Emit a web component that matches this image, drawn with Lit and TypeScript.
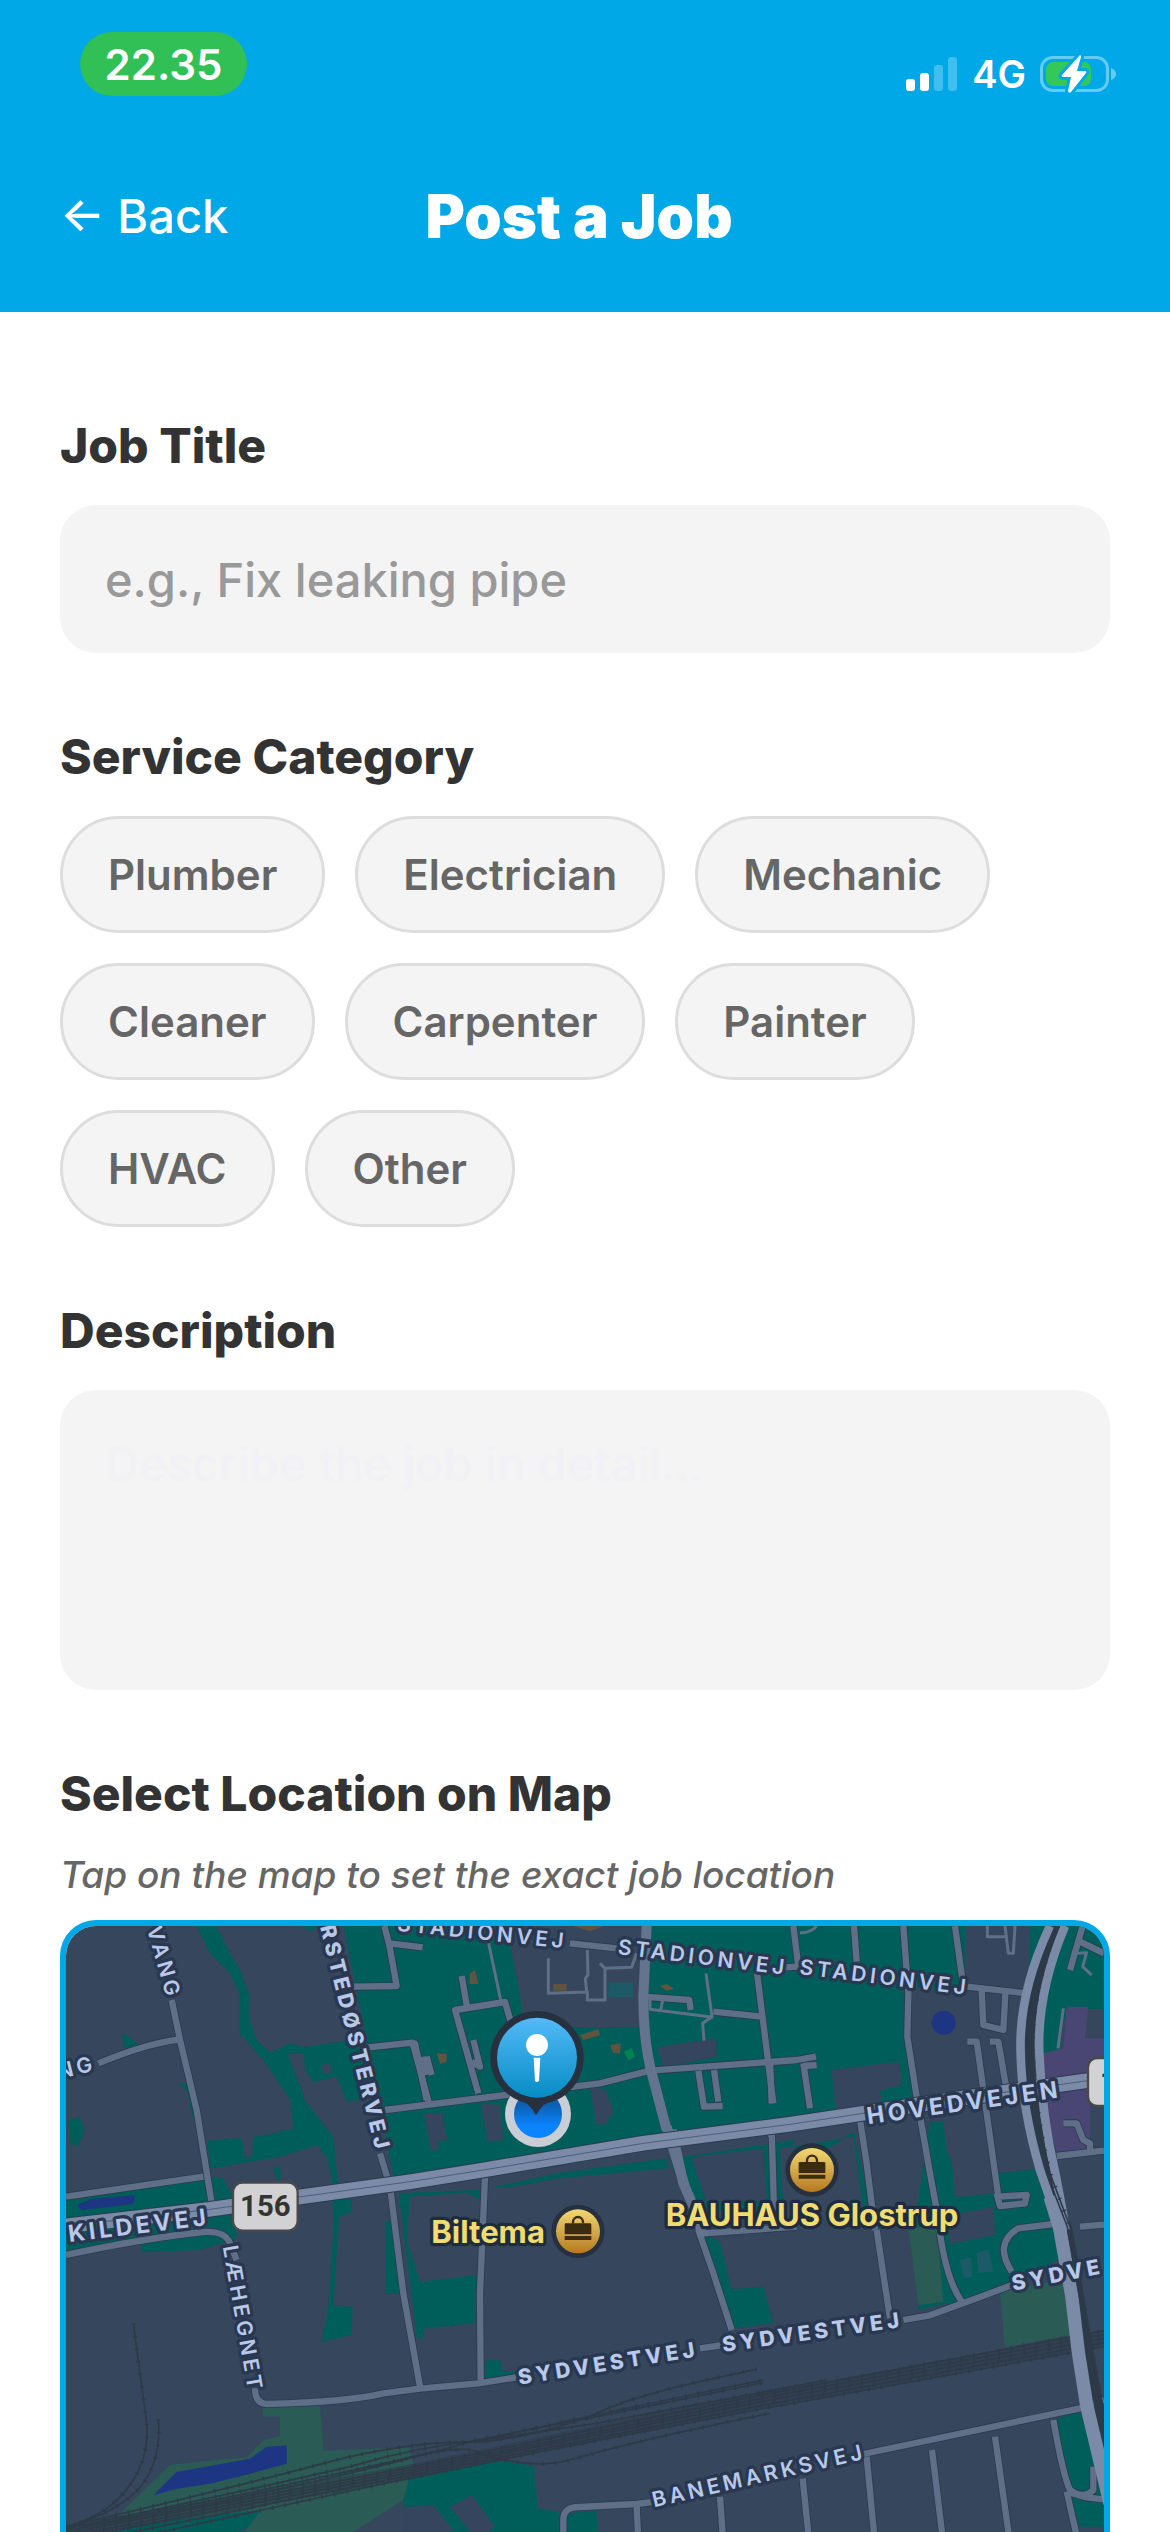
import { LitElement, html, svg, css } from "lit";
import { customElement, state } from "lit/decorators.js";
import { classMap } from "lit/directives/class-map.js";

const CATEGORIES = [
  "Plumber", "Electrician", "Mechanic", "Cleaner",
  "Carpenter", "Painter", "HVAC", "Other",
];

type Label = { text: string; x: number; y: number; angle: number; kind: string };

const STREETS: Label[] = [
  { text: "VANG", x: 290, y: 55, angle: 74, kind: "street" },
  { text: "NG", x: 28, y: 508, angle: -14, kind: "street" },
  { text: "RSTEDØSTERVEJ", x: 810, y: 50, angle: 76, kind: "street bold" },
  { text: "STADIONVEJ", x: 1040, y: 62, angle: 6, kind: "street" },
  { text: "STADIONVEJ", x: 1702, y: 132, angle: 7, kind: "street" },
  { text: "STADIONVEJ", x: 2247, y: 192, angle: 7, kind: "street" },
  { text: "KILDEVEJ", x: 58, y: 996, angle: -7, kind: "street large" },
  { text: "HOVEDVEJEN", x: 2454, y: 643, angle: -8, kind: "street large" },
  { text: "LÆHEGNET", x: 518, y: 1010, angle: 80, kind: "street" },
  { text: "SYDVESTVEJ", x: 1408, y: 1424, angle: -9, kind: "street bold" },
  { text: "SYDVESTVEJ", x: 2020, y: 1326, angle: -8, kind: "street bold" },
  { text: "SYDVE", x: 2890, y: 1142, angle: -11, kind: "street bold" },
  { text: "BANEMARKSVEJ", x: 1812, y: 1792, angle: -13, kind: "street" },
];

const PARKS = [
  "880,48 1380,48 1380,100 1410,256 1424,350 1780,352 1780,48 2745,48 2745,248 2580,230 2568,380 2600,560 2440,600 1780,690 1080,810 1030,800 1000,640",
  "2940,48 3000,48 2925,300 2925,210 2935,180",
  "3040,48 3162,48 3162,300 3110,300 3050,320 2980,330 2985,200",
  "2990,290 3060,290 3040,340 2980,340 2980,300",
  "2975,250 3060,250 3040,330 3030,420 2980,440 2970,420",
  "440,48 500,48 535,120 570,180 600,260 600,330 620,390 660,428 720,400 760,412 890,392 950,400 930,570 890,575 860,500 790,516 765,480 762,430 712,430 750,525 765,570 810,630 850,680 862,800 868,850 905,868 905,905 868,920 850,1188 908,1190 905,1275 815,1296 835,1190 850,960 845,800 830,742 800,706 690,740 600,756 480,776 472,692 575,684 585,745 606,740 610,682 730,656 720,568 640,450 568,370 568,250 540,190 480,130",
  "215,375 230,375 265,405 225,418",
  "385,518 412,524 436,635 428,620 412,546",
  "55,632 90,622 103,660 85,710 62,700",
  "755,48 805,48 780,66",
  "48,872 460,805 515,800 545,850 560,905 560,985 450,1020 275,1026 270,990 48,1020",
  "670,770 692,775 692,810 680,810",
  "1005,935 1030,930 1062,1150 1005,1150",
  "1046,850 1145,845 1290,840 1520,790 1850,745 1855,775 1520,806 1385,832 1320,830 1290,870 1250,848 1080,860 1070,990 1110,1115 1285,1095 1275,1240 1125,1255 1115,1290 1100,1280",
  "1305,1351 1350,1351 1356,1382 1400,1386 1385,1402 1305,1408",
  "1860,748 2230,690 2240,780 2410,665 2430,750 2465,910 2440,900 2410,680 2190,715 2200,900 1920,900",
  "1955,968 2010,996 2045,1138 2140,1130 2170,1238 2050,1256",
  "2640,636 2680,634 2690,725 2705,750 2715,862 2850,850 2845,790 2975,775 3015,910 3030,1046 2880,1125 2740,1170 2605,1200 2590,960",
  "200,1866 300,1826 630,1794 632,1838 560,1866 560,1900 200,1900",
  "1060,1710 1340,1650 1450,1668 1465,1796 1530,1806 1530,1900 1060,1900",
  "1550,1811 1640,1801 1642,1900 1550,1900",
  "3020,1526 3090,1506 3162,1700 3162,1850 3090,1850 3050,1740",
];

const BUILDINGS = [
  "2345,480 2548,455 2556,524 2490,542 2496,592 2358,602",
  "1822,412 1998,385 2000,440 1840,470",
  "1122,610 1178,608 1190,690 1160,696 1168,718 1142,722",
  "1292,580 1350,586 1360,690 1314,696",
  "1620,530 1668,540 1690,605 1670,640 1640,646",
  "1925,742 2140,716 2150,870 1970,880",
  "815,465 840,460 845,490 820,490",
  "1200,1790 1265,1756 1335,1850 1280,1890",
  "1060,1791 1150,1786 1215,1866 1060,1866",
  "2700,916 2830,890 2836,975 2700,1002",
  "2745,48 2938,48 2938,218 2760,212",
];

const MINOR = [
  "M365,270 L390,390 L440,600 L485,880",
  "M145,460 Q290,400 390,388",
  "M48,860 L460,800",
  "M1003,48 L1018,105 L1040,228 L912,230 M1018,100 L1118,112",
  "M955,412 L1088,398 L1138,585 M1120,440 L1130,490",
  "M1005,600 L1650,520 L1800,482 L2240,450 L2298,440",
  "M990,730 L1020,830 L1060,1150 L1110,1430 M1020,800 L1022,850",
  "M1080,400 L1095,400 L1130,570 M1130,440 L1145,495 M1115,490 L1145,480",
  "M1235,198 L1250,285 M1285,550 L1215,300 L1365,276 L1385,345",
  "M1270,390 L1290,470 L1265,455",
  "M1560,100 L1700,115 M1780,260 L1918,270 L1922,300",
  "M2120,180 L2155,460 L2170,580 M1990,305 L2135,320",
  "M1945,482 L1962,590 L2018,588 M1992,480 L2005,575",
  "M2230,48 L2245,170 L2200,172 M2412,48 L2420,155 M2560,48 L2575,250 L2572,380 L2600,560 L2640,790 L2662,910",
  "M2715,48 L2738,215 M2750,230 L2930,250 M2795,240 L2800,345 L2860,360 L2866,250",
  "M2752,395 L2780,395 L2845,860 L2930,855 L2925,880 L2850,888 L2840,850 M2820,395 L2845,395 L2870,540",
  "M2160,450 L2165,580 M2260,460 L2280,595 M2260,468 L2300,465",
  "M2430,630 L2450,760 L2475,960",
  "M2165,660 L2172,900 M2165,680 L2155,660",
  "M1305,800 L1290,1150 L1292,1410",
  "M48,1035 Q280,985 460,966 Q525,962 540,1000 L560,1050",
  "M615,1435 Q615,1480 650,1482 Q900,1475 1000,1450 L1110,1436 L1285,1420 L1400,1402",
  "M1945,960 L1990,1090 L2045,1260 M1960,970 L2240,950",
  "M1950,1315 L2020,1305 M2560,1230 L2640,1216 L2780,1165 L2900,1120",
  "M2480,960 L2520,1225 M2670,970 Q2690,1110 2735,1175",
  "M2885,1085 Q2830,1000 2905,955 L3010,942 M3090,950 L3162,944",
  "M1540,1900 L1540,1830 Q1540,1790 1590,1791 L1760,1782 L1815,1775",
  "M1760,1790 L1765,1900 M2010,1760 L2020,1900",
  "M2440,1632 L3090,1495 L3162,1470",
  "M2450,1640 L2475,1900 M2646,1620 L2680,1900 M2835,1580 L2880,1900 M2258,1706 L2278,1900",
  "M3010,1530 Q3040,1700 3060,1740 Q3100,1770 3130,1740 L3130,1670 M3050,1745 L3110,1762 L3162,1768",
  "M3050,1745 L3085,1900",
  "M3098,48 L3060,180 M3090,95 L3162,130",
  "M3040,640 L3080,640 L3100,690 L3120,700 L3120,725 M3020,738 L3162,722",
];

const PATHS = [
  "M1495,145 L1495,250 L1612,246 L1612,270 L1665,270 L1665,175 L1745,172 L1760,130 M1612,120 L1614,195 L1606,205 L1610,246 M1650,160 L1665,175",
  "M1316,100 L1352,270",
  "M1968,190 L1986,320 L1958,340 L1962,392 M1800,260 L1800,298 L1990,322 M1838,270 L1832,300",
  "M2812,48 L2812,80 L2865,80 M2865,48 L2875,130 L2890,130 L2895,48",
  "M3040,295 L3024,415 M3080,130 L3110,128 L3098,170 L3125,195",
  "M2250,68 Q2280,70 2300,48",
];

const MAJOR = [
  "M1790,48 L1780,260 Q1780,400 1808,500 L1850,660",
  "M1850,650 L1905,830 M1865,660 L1900,820 L1935,900 L1960,980",
];

const HIGHWAY =
  "M48,948 L480,898 L1080,815 L1300,780 L1780,700 L2220,643 L2440,610 L2700,570 L3162,505";

const EAST_ROADS = [
  "M3000,48 Q2905,250 2912,430 Q2915,590 2970,780 L3020,925",
  "M3045,48 Q2960,250 2968,430 Q2975,620 3018,800 L3048,960",
];

const EAST_AVENUE =
  "M3000,860 L3028,950 L3065,1156 L3085,1326 L3110,1486 L3180,1780";

const EAST_RAIL = [
  "M3016,48 Q2935,250 2938,430 Q2945,600 2990,790 L3052,950 L3095,1200 L3130,1400 L3175,1640",
  "M3024,48 Q2943,250 2948,430 Q2955,600 3000,790 L3060,950 L3105,1200 L3142,1400 L3185,1640",
];

const RAIL_BED = "M48,1868 L1080,1686 L1640,1568 L2160,1466 L3162,1284";

const RAILS = [
  "M250,1240 L290,1540 Q300,1660 220,1750 Q160,1820 48,1850",
  "M325,1528 Q335,1640 280,1720 Q220,1800 48,1856",
  "M48,1850 Q520,1740 820,1660 Q1080,1590 1300,1596 Q1500,1570 1640,1510 Q1760,1450 2120,1378",
  "M48,1856 Q600,1740 900,1670 Q1100,1610 1300,1590 Q1600,1520 2140,1410",
  "M100,1850 Q700,1730 1080,1642 Q1250,1600 1300,1632 Q1440,1680 1560,1650 Q1760,1590 2160,1510",
  "M48,1862 Q800,1730 1280,1590 L1640,1520 L2140,1418",
  "M48,1870 L1080,1672 L1640,1556 L2160,1450 L3162,1262",
  "M48,1880 L1080,1680 L1640,1566 L2160,1460 L3162,1274",
  "M48,1890 L1080,1688 L1640,1574 L2160,1470 L3162,1286",
  "M120,1892 L1080,1696 L1640,1584 L2160,1482 L3162,1298",
  "M220,1890 L1080,1704 L1640,1592 L2160,1492 L3162,1310",
  "M1300,1590 L1640,1540 L2330,1410",
];

@customElement("job-map")
export class JobMap extends LitElement {
  static styles = css`
    :host { display: block; }
    .map {
      display: block;
      width: 100%;
      font-family: Inter, "Liberation Sans", sans-serif;
    }
    .park { fill: #005e5a; }
    .grass { fill: #2a5b55; }
    .building { fill: #36455e; }
    .retail { fill: #4a4673; }
    .lake { fill: #1d3583; }
    .road { fill: none; stroke: #5f6f87; stroke-linejoin: round; }
    .casing { fill: none; stroke: #2b3b50; stroke-linejoin: round; }
    .minor { stroke-width: 19; }
    .minor-casing { stroke-width: 24; }
    .path { stroke-width: 9; }
    .major { stroke: #64748e; stroke-width: 30; }
    .highway { stroke: #7b8ba7; stroke-width: 44; }
    .east { stroke: #7b8ba7; stroke-width: 26; }
    .avenue { stroke: #7b8ba7; stroke-width: 40; }
    .east-bed { fill: none; stroke: #2c3948; stroke-width: 28; }
    .median { fill: none; stroke: #35455b; stroke-width: 2; }
    .bed { fill: none; stroke: #2e3a48; stroke-width: 44; opacity: 0.55; }
    .rail { fill: none; stroke: #2e3a48; stroke-width: 5; }
    .ties { fill: none; stroke: #2e3a48; stroke-width: 13; stroke-dasharray: 4 34; }
    .street {
      fill: #b9c8e8;
      stroke: #293850;
      stroke-width: 20;
      stroke-linejoin: round;
      paint-order: stroke;
      font-size: 63px;
      font-weight: 600;
      letter-spacing: 11px;
    }
    .bold { font-weight: 800; letter-spacing: 12px; }
    .large { font-size: 70px; font-weight: 700; }
    .poi {
      fill: #f1dc72;
      stroke: #1f2c40;
      stroke-width: 20;
      stroke-linejoin: round;
      paint-order: stroke;
      font-size: 93px;
      font-weight: 700;
    }
    .shield { fill: #d2d2d4; stroke: #4b4848; stroke-width: 7; }
    .shield-text { fill: #343434; font: 700 88px "Liberation Sans Narrow", Roboto, sans-serif; }
    .ring { fill: #27303f; }
    .bag { fill: #3b2c10; }
    .handle { fill: none; stroke: #3b2c10; stroke-width: 7; }
  `;

  private badge(cx: number, cy: number) {
    return svg`
      <g transform="translate(${cx} ${cy})">
        <circle class="ring" r="80"></circle>
        <circle r="66" fill="url(#gold)"></circle>
        <path class="handle" d="M-15,-24 V-28 A15,15 0 0 1 15,-28 V-24"></path>
        <path class="bag" d="M-40,-20 Q-40,-24 -36,-24 H36 Q40,-24 40,-20 V9 H-40 Z M-40,14 H40 V26 H-40 Z"></path>
      </g>`;
  }

  render() {
    return html`
      <svg class="map" viewBox="48 48 3114 2664" role="img" aria-label="Map of Glostrup">
        <defs>
          <linearGradient id="gold" x1="0" y1="0" x2="0" y2="1">
            <stop offset="0" stop-color="#f2d873"></stop>
            <stop offset="1" stop-color="#b67a20"></stop>
          </linearGradient>
          <linearGradient id="azure" x1="0" y1="0" x2="0" y2="1">
            <stop offset="0" stop-color="#52baf7"></stop>
            <stop offset="1" stop-color="#078cc4"></stop>
          </linearGradient>
          <linearGradient id="dot" x1="0" y1="0" x2="0" y2="1">
            <stop offset="0.3" stop-color="#0c5fb0"></stop>
            <stop offset="0.75" stop-color="#0a84ff"></stop>
          </linearGradient>
        </defs>
        <rect x="48" y="48" width="3114" height="2664" fill="#36475d"></rect>
        ${PARKS.map((p) => svg`<polygon class="park" points=${p}></polygon>`)}
        <polygon class="grass" points="640,1490 810,1480 820,1622 1075,1612 1090,1660 1060,1770 910,1866 560,1900 632,1800 200,1850 48,1866 48,1845 200,1820 360,1664 590,1642 640,1590 690,1578 690,1520 640,1520"></polygon>
        <polygon class="grass" points="2575,950 2660,950 2680,1176 2605,1186"></polygon>
        <polygon class="grass" points="2850,1146 3050,1106 3060,1276 2865,1311"></polygon>
        ${BUILDINGS.map((p) => svg`<polygon class="building" points=${p}></polygon>`)}
        <polygon class="retail" points="3050,290 3115,290 3105,385 3162,385 3162,530 3120,560 3120,720 3020,725 2980,590 2980,430 3040,415"></polygon>
        <polygon class="lake" points="310,1756 380,1686 600,1646 650,1611 710,1606 710,1661 600,1691 480,1721 380,1736"></polygon>
        <polygon class="lake" points="80,885 130,866 255,856 250,882 95,900"></polygon>
        <circle class="lake" cx="2681" cy="338" r="36"></circle>
        <g fill="#1d5a68">
          <rect x="1675" y="218" width="74" height="44"></rect>
          <path d="M2730,1050 L2765,1042 L2765,1100 L2740,1105 Z M2780,1030 L2815,1018 L2830,1085 L2785,1088 Z"></path>
        </g>
        <g fill="#5f5440">
          <path d="M1260,190 L1275,180 L1285,222 L1258,222 Z M1510,222 H1550 V242 H1510 Z M1830,228 L1850,222 L1872,236 L1850,242 Z M1590,375 L1645,358 L1650,376 L1600,390 Z M1680,405 L1712,400 L1710,430 L1690,430 Z M1160,430 L1190,432 L1190,455 L1170,462 Z M1570,48 H1660 L1620,64 Z"></path>
        </g>
        <path fill="#00834f" d="M1722,425 L1745,415 L1755,440 L1735,450 Z"></path>

        <path class="bed" d=${RAIL_BED}></path>
        ${RAILS.map((d) => svg`<path class="rail" d=${d}></path><path class="ties" d=${d}></path>`)}
        ${MINOR.map((d) => svg`<path class="casing minor-casing" d=${d}></path>`)}
        ${MINOR.map((d) => svg`<path class="road minor" d=${d}></path>`)}
        ${PATHS.map((d) => svg`<path class="road path" d=${d}></path>`)}
        ${MAJOR.map((d) => svg`<path class="road major" d=${d}></path>`)}
        <path class="casing" stroke-width="50" d=${HIGHWAY}></path>
        <path class="road highway" d=${HIGHWAY}></path>
        <path class="median" d=${HIGHWAY}></path>
        <path class="east-bed" d=${EAST_RAIL[0]}></path>
        ${EAST_ROADS.map((d) => svg`<path class="road east" d=${d}></path>`)}
        <path class="road avenue" d=${EAST_AVENUE}></path>
        ${EAST_RAIL.map((d) => svg`<path class="rail" d=${d}></path>`)}
        <path class="ties" d=${EAST_RAIL[1]}></path>

        ${STREETS.map((s) => svg`
          <text class=${s.kind} transform="translate(${s.x} ${s.y}) rotate(${s.angle})">${s.text}</text>`)}

        <rect class="shield" x="549" y="818" width="194" height="144" rx="28"></rect>
        <text class="shield-text" x="646" y="918" text-anchor="middle">156</text>
        <rect class="shield" x="3114" y="444" width="194" height="144" rx="28"></rect>
        <text class="shield-text" x="3150" y="546">1</text>

        <circle cx="1464" cy="612" r="99" fill="#c9cdd6"></circle>
        <circle cx="1464" cy="612" r="72" fill="url(#dot)"></circle>
        <path class="ring" d="M1400,560 Q1440,580 1458,616 Q1476,580 1520,560 Z"></path>
        <circle class="ring" cx="1461" cy="443" r="140"></circle>
        <circle cx="1461" cy="443" r="120" fill="url(#azure)"></circle>
        <circle cx="1461" cy="405" r="33" fill="#ffffff"></circle>
        <path fill="#ffffff" d="M1451,443 H1471 L1467,512 Q1461,520 1455,512 Z"></path>

        ${this.badge(1584, 964)}
        ${this.badge(2286, 780)}
        <text class="poi" x="1144" y="1000">Biltema</text>
        <text class="poi" x="2286" y="948" text-anchor="middle">BAUHAUS Glostrup</text>
      </svg>
    `;
  }
}

@customElement("app-root")
export class AppRoot extends LitElement {
  @state() private category = "";

  static styles = css`
    :host {
      display: flex;
      flex-direction: column;
      height: 100vh;
      overflow: hidden;
      background: #ffffff;
      color: #333333;
      font-family: Inter, "Liberation Sans", sans-serif;
    }
    button, input, textarea { font-family: inherit; margin: 0; }
    .top { background: #00a8e8; color: #ffffff; flex: none; }
    .status {
      display: flex;
      align-items: center;
      justify-content: space-between;
      padding: 32px 54px 0 80px;
    }
    .time {
      display: grid;
      place-items: center;
      width: 167px;
      height: 64px;
      border-radius: 32px;
      background: #30c055;
      font-size: 42px;
      font-weight: 600;
    }
    .signals {
      display: flex;
      align-items: center;
      gap: 14px;
      padding-top: 20px;
      font-size: 38px;
      line-height: 44px;
      font-weight: 600;
    }
    .signals svg { display: block; }
    .bar {
      display: flex;
      align-items: center;
      justify-content: space-between;
      padding: 84px 60px 60px;
    }
    .back {
      border: 0;
      padding: 0;
      background: none;
      color: inherit;
      font-size: 47px;
      line-height: 58px;
      font-weight: 500;
      text-align: left;
    }
    .title { margin: 0; font-size: 60px; line-height: 72px; font-weight: 900; }
    .spacer { width: 180px; }
    .form {
      flex: 1;
      min-height: 0;
      overflow-y: auto;
      scrollbar-width: none;
      display: flex;
      flex-direction: column;
      gap: 75px;
      padding: 105px 60px;
    }
    .field { display: flex; flex-direction: column; flex: none; gap: 30px; }
    .label { margin: 0; font-size: 48px; line-height: 58px; font-weight: 800; }
    .input {
      display: block;
      box-sizing: border-box;
      width: 100%;
      border: 0;
      border-radius: 36px;
      background: #f4f4f4;
      padding: 45px;
      color: #333333;
      font-size: 47px;
      line-height: 58px;
      font-weight: 500;
      resize: none;
    }
    .input::placeholder { color: #999999; opacity: 1; }
    .single { height: 148px; }
    .area { height: 300px; }
    .area::placeholder { color: #f1f1f6; }
    .chips { display: flex; flex-wrap: wrap; gap: 30px; }
    .chip {
      border: 3px solid #dddddd;
      border-radius: 60px;
      background: #f4f4f4;
      padding: 30px 45px;
      color: #666666;
      font-size: 42px;
      line-height: 51px;
      font-weight: 600;
    }
    .chosen { background: #00a8e8; border-color: #00a8e8; color: #ffffff; }
    .hint {
      margin: 0;
      color: #666666;
      font-size: 37px;
      line-height: 43px;
      font-weight: 500;
      font-style: italic;
    }
    .located { display: flex; flex-direction: column; gap: 24px; }
    .frame { overflow: hidden; border: 6px solid #00a8e8; border-radius: 36px; }
  `;

  render() {
    return html`
      <header class="top">
        <div class="status">
          <span class="time">22.35</span>
          <div class="signals">
            <svg width="52" height="34" viewBox="0 0 52 34" fill="#ffffff" aria-hidden="true">
              <rect x="0" y="22" width="9" height="12" rx="3"></rect>
              <rect x="14" y="16" width="9" height="18" rx="3"></rect>
              <rect x="28" y="8" width="9" height="26" rx="3" opacity="0.25"></rect>
              <rect x="42" y="0" width="9" height="34" rx="3" opacity="0.25"></rect>
            </svg>
            <span>4G</span>
            <svg width="76" height="38" viewBox="0 0 76 38" aria-hidden="true">
              <rect x="1.5" y="2.5" width="66" height="33" rx="11" fill="none" stroke="#66cbf1" stroke-width="3"></rect>
              <path fill="#66cbf1" d="M71,13 Q76,15 76,19 Q76,23 71,25 Z"></path>
              <rect x="6" y="7" width="45" height="24" rx="7" fill="#34c759"></rect>
              <path fill="#ffffff" stroke="#00a8e8" stroke-width="6" stroke-linejoin="round" paint-order="stroke" d="M40,0 L22,20 Q21,22 23,22 H31 L28,36 Q29,39 31,37 L46,18 Q47,16 45,16 H37 L41,2 Q41,0 40,0 Z"></path>
            </svg>
          </div>
        </div>
        <div class="bar">
          <button class="back" type="button">← Back</button>
          <h1 class="title">Post a Job</h1>
          <div class="spacer"></div>
        </div>
      </header>
      <main class="form">
        <div class="field">
          <label class="label" for="job-title">Job Title</label>
          <input class="input single" id="job-title" type="text" placeholder="e.g., Fix leaking pipe" />
        </div>
        <div class="field" role="group" aria-labelledby="category">
          <h2 class="label" id="category">Service Category</h2>
          <div class="chips">
            ${CATEGORIES.map((c) => html`
              <button
                type="button"
                class=${classMap({ chip: true, chosen: c === this.category })}
                aria-pressed=${c === this.category}
                @click=${() => (this.category = c)}
              >${c}</button>`)}
          </div>
        </div>
        <div class="field">
          <label class="label" for="description">Description</label>
          <textarea class="input area" id="description" placeholder="Describe the job in detail..."></textarea>
        </div>
        <section class="field" aria-labelledby="location">
          <h2 class="label" id="location">Select Location on Map</h2>
          <div class="located">
            <p class="hint">Tap on the map to set the exact job location</p>
            <div class="frame"><job-map></job-map></div>
          </div>
        </section>
      </main>
    `;
  }
}
